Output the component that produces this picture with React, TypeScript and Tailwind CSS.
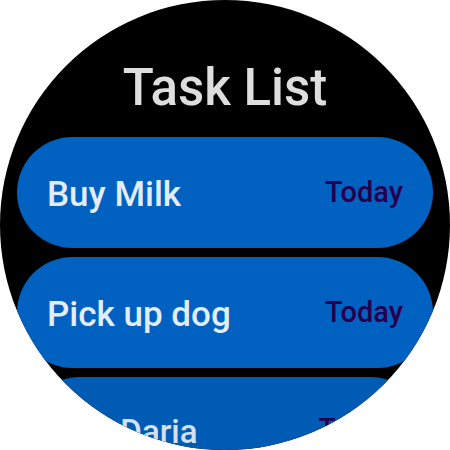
type Task = { title: string; due: string; receding?: boolean };

const tasks: Task[] = [
  { title: "Buy Milk", due: "Today" },
  { title: "Pick up dog", due: "Today" },
  { title: "Call Daria", due: "Today", receding: true },
];

function TaskChip({ title, due, receding }: Task) {
  return (
    <li className={receding ? "px-2.5" : ""}>
      <button
        type="button"
        className={`flex w-full items-center justify-between rounded-full text-left font-medium ${
          receding ? "h-[105px] bg-[#005bb5] px-[29px]" : "h-[111px] bg-[#0061c1] px-[30px]"
        }`}
      >
        <span className={`pt-1 leading-10 ${receding ? "text-[33px] text-[#d5e0ee]" : "text-[35px] text-[#e3edfa]"}`}>
          {title}
        </span>
        <span className={`pb-0.5 leading-9 text-[#25004f] ${receding ? "text-[28px]" : "text-[29px]"}`}>
          {due}
        </span>
      </button>
    </li>
  );
}

export default function App() {
  return (
    <main className="aspect-square w-full overflow-hidden rounded-full bg-black px-[17px] pt-[58px] font-['Roboto',sans-serif]">
      <h1 className="mb-[19px] text-center text-[51px] leading-[60px] font-medium text-[#dedede]">Task List</h1>
      <ul className="flex flex-col gap-[9px]">
        {tasks.map((task) => (
          <TaskChip key={task.title} {...task} />
        ))}
      </ul>
    </main>
  );
}
